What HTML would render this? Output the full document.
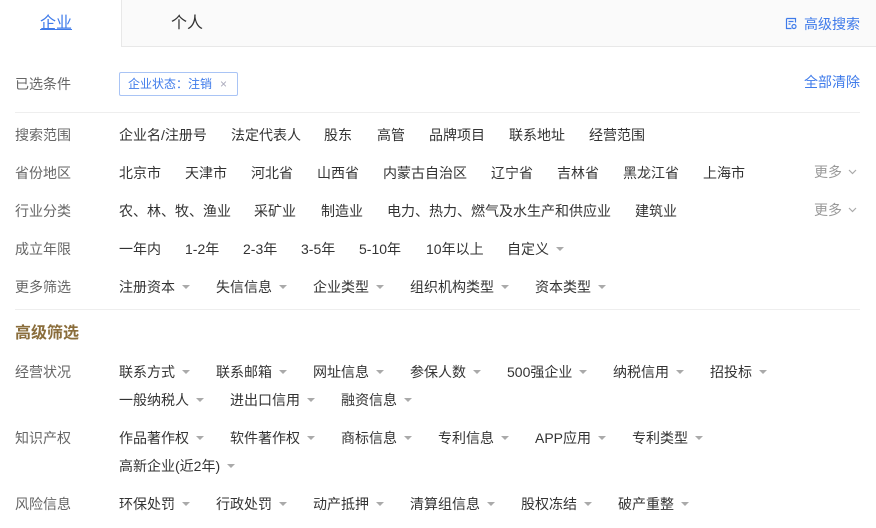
<!DOCTYPE html>
<html><head><meta charset="utf-8"><style>
*{margin:0;padding:0;box-sizing:border-box}
body{width:876px;height:528px;overflow:hidden;background:#fff;font-family:"Liberation Sans","Noto Sans CJK SC",sans-serif;font-size:14px;color:#333;position:relative}
.a{position:absolute;white-space:nowrap;line-height:20px}
.l{color:#666}
.c::after{content:"";display:inline-block;margin-left:7px;vertical-align:middle;border-left:4px solid transparent;border-right:4px solid transparent;border-top:4px solid #aaa;position:relative;top:-1px}
.hr{position:absolute;left:15px;width:845px;height:1px;background:#eee}
.more{color:#999}
</style></head><body>
<div style="position:absolute;left:121px;top:0;width:755px;height:47px;background:#fafafa;border-left:1px solid #e8e8e8;border-bottom:1px solid #e8e8e8"></div>
<div class="a" style="left:40px;top:14px;font-size:16px;color:#3f7bea;text-decoration:underline">企业</div>
<div class="a" style="left:171px;top:14px;font-size:16px;color:#333">个人</div>
<div class="a" style="left:785px;top:14px;color:#3f7bea"><svg width="13" height="13" viewBox="0 0 13 13" style="vertical-align:-1px;margin-right:6px"><path d="M1.5 1.5h9v4M1.5 1.5v10h5M3.5 4.5h5M3.5 7h2" fill="none" stroke="#3f7bea" stroke-width="1.2"/><circle cx="9" cy="9.5" r="2" fill="none" stroke="#3f7bea" stroke-width="1.2"/></svg>高级搜索</div>

<div class="a l" style="left:15px;top:74px">已选条件</div>
<div class="a" style="left:119px;top:72px;height:24px;width:119px;border:1px solid #a9c4f5;border-radius:2px;color:#3f7bea;font-size:12px;line-height:22px;padding-left:8px">企业状态：注销<span style="color:#aab;margin-left:8px">×</span></div>
<div class="a" style="left:804px;top:72px;color:#3f7bea;font-size:14px">全部清除</div>
<div class="hr" style="top:112px"></div>

<div class="a l" style="left:15px;top:125px">搜索范围</div>
<div class="a" style="left:119px;top:125px">企业名/注册号</div><div class="a" style="left:231px;top:125px">法定代表人</div><div class="a" style="left:324px;top:125px">股东</div><div class="a" style="left:377px;top:125px">高管</div><div class="a" style="left:429px;top:125px">品牌项目</div><div class="a" style="left:509px;top:125px">联系地址</div><div class="a" style="left:589px;top:125px">经营范围</div>

<div class="a l" style="left:15px;top:163px">省份地区</div>
<div class="a" style="left:119px;top:163px">北京市</div><div class="a" style="left:185px;top:163px">天津市</div><div class="a" style="left:251px;top:163px">河北省</div><div class="a" style="left:317px;top:163px">山西省</div><div class="a" style="left:383px;top:163px">内蒙古自治区</div><div class="a" style="left:491px;top:163px">辽宁省</div><div class="a" style="left:557px;top:163px">吉林省</div><div class="a" style="left:623px;top:163px">黑龙江省</div><div class="a" style="left:703px;top:163px">上海市</div>
<div class="a more" style="left:814px;top:162px">更多<svg width="9" height="6" viewBox="0 0 9 6" style="margin-left:6px;vertical-align:2px"><path d="M1 1l3.5 3.5L8 1" fill="none" stroke="#aaa" stroke-width="1.2"/></svg></div>

<div class="a l" style="left:15px;top:201px">行业分类</div>
<div class="a" style="left:119px;top:201px">农、林、牧、渔业</div><div class="a" style="left:254px;top:201px">采矿业</div><div class="a" style="left:321px;top:201px">制造业</div><div class="a" style="left:387px;top:201px">电力、热力、燃气及水生产和供应业</div><div class="a" style="left:635px;top:201px">建筑业</div>
<div class="a more" style="left:814px;top:200px">更多<svg width="9" height="6" viewBox="0 0 9 6" style="margin-left:6px;vertical-align:2px"><path d="M1 1l3.5 3.5L8 1" fill="none" stroke="#aaa" stroke-width="1.2"/></svg></div>

<div class="a l" style="left:15px;top:239px">成立年限</div>
<div class="a" style="left:119px;top:239px">一年内</div><div class="a" style="left:185px;top:239px">1-2年</div><div class="a" style="left:243px;top:239px">2-3年</div><div class="a" style="left:301px;top:239px">3-5年</div><div class="a" style="left:359px;top:239px">5-10年</div><div class="a" style="left:426px;top:239px">10年以上</div><div class="a c" style="left:507px;top:239px">自定义</div>

<div class="a l" style="left:15px;top:277px">更多筛选</div>
<div class="a c" style="left:119px;top:277px">注册资本</div><div class="a c" style="left:216px;top:277px">失信信息</div><div class="a c" style="left:313px;top:277px">企业类型</div><div class="a c" style="left:410px;top:277px">组织机构类型</div><div class="a c" style="left:535px;top:277px">资本类型</div>
<div class="hr" style="top:309px"></div>

<div class="a" style="left:15px;top:324px;font-size:16px;font-weight:bold;color:#8a6d3b">高级筛选</div>

<div class="a l" style="left:15px;top:362px">经营状况</div>
<div class="a c" style="left:119px;top:362px">联系方式</div><div class="a c" style="left:216px;top:362px">联系邮箱</div><div class="a c" style="left:313px;top:362px">网址信息</div><div class="a c" style="left:410px;top:362px">参保人数</div><div class="a c" style="left:507px;top:362px">500强企业</div><div class="a c" style="left:613px;top:362px">纳税信用</div><div class="a c" style="left:710px;top:362px">招投标</div>
<div class="a c" style="left:119px;top:390px">一般纳税人</div><div class="a c" style="left:230px;top:390px">进出口信用</div><div class="a c" style="left:341px;top:390px">融资信息</div>

<div class="a l" style="left:15px;top:428px">知识产权</div>
<div class="a c" style="left:119px;top:428px">作品著作权</div><div class="a c" style="left:230px;top:428px">软件著作权</div><div class="a c" style="left:341px;top:428px">商标信息</div><div class="a c" style="left:438px;top:428px">专利信息</div><div class="a c" style="left:535px;top:428px">APP应用</div><div class="a c" style="left:632px;top:428px">专利类型</div>
<div class="a c" style="left:119px;top:456px">高新企业(近2年)</div>

<div class="a l" style="left:15px;top:494px">风险信息</div>
<div class="a c" style="left:119px;top:494px">环保处罚</div><div class="a c" style="left:216px;top:494px">行政处罚</div><div class="a c" style="left:313px;top:494px">动产抵押</div><div class="a c" style="left:410px;top:494px">清算组信息</div><div class="a c" style="left:521px;top:494px">股权冻结</div><div class="a c" style="left:618px;top:494px">破产重整</div>
</body></html>
